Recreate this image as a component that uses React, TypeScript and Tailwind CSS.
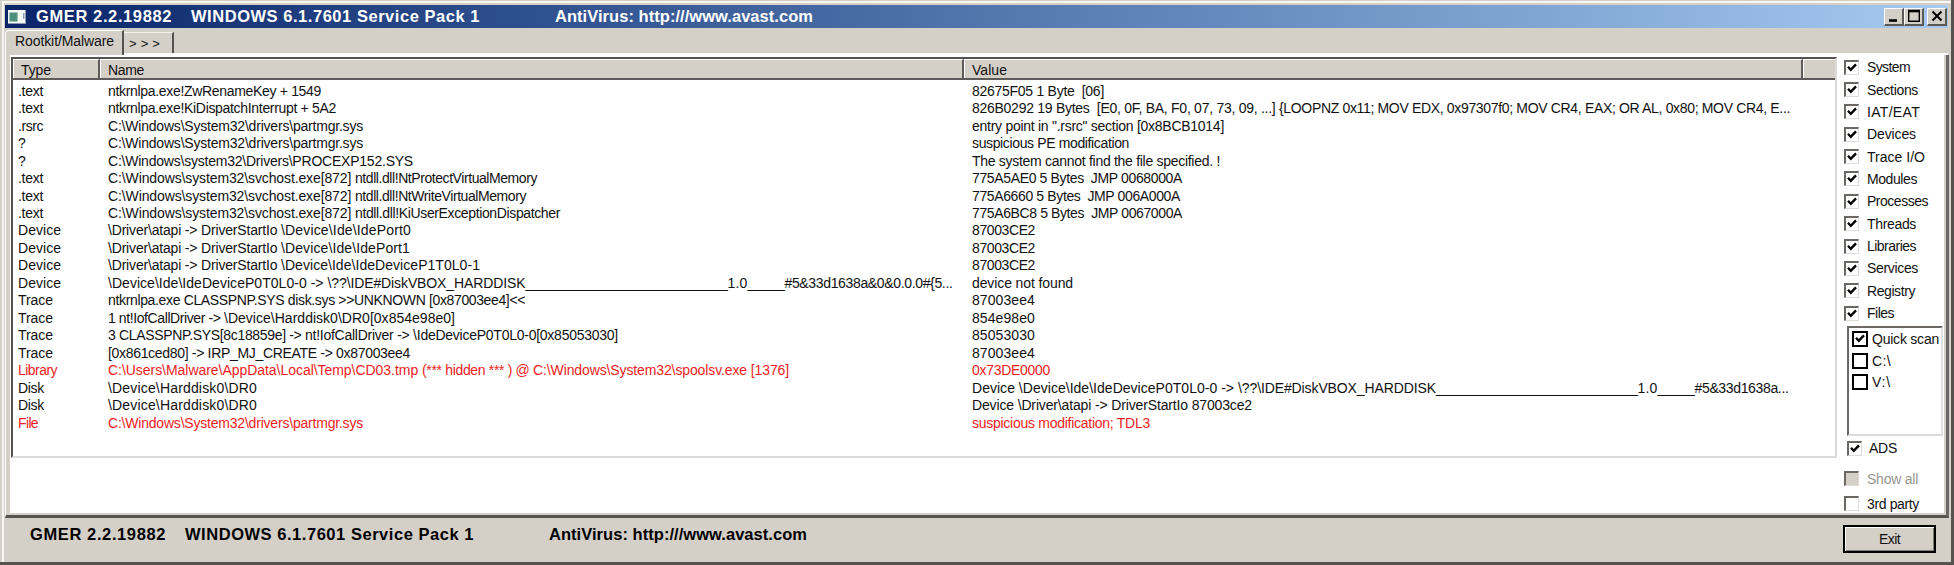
import { useLayoutEffect, useRef } from "react";

type Seg = [text: string, width: number];

/** Text set to an exact advance width by adjusting its tracking. */
function Fit({ t, w, className = "" }: { t: string; w: number; className?: string }) {
  const ref = useRef<HTMLSpanElement>(null);
  useLayoutEffect(() => {
    const el = ref.current;
    if (!el) return;
    el.style.letterSpacing = "0px";
    const natural = el.getBoundingClientRect().width;
    el.style.letterSpacing = `${(w - natural) / t.length}px`;
  }, [t, w]);
  return (
    <span ref={ref} className={`inline-block shrink-0 whitespace-pre ${className}`}>
      {t}
    </span>
  );
}

const U27 = "_".repeat(27);
const U5 = "_".repeat(5);

const rows: { type: Seg; name: Seg[]; value: Seg[]; red?: boolean }[] = [
  { type: [".text", 25], name: [["ntkrnlpa.exe!ZwRenameKey + 1549", 213]], value: [["82675F05 1 Byte  [06]", 132]] },
  {
    type: [".text", 25],
    name: [["ntkrnlpa.exe!KiDispatchInterrupt + 5A2", 228]],
    value: [
      ["826B0292 19 Bytes  [E0, 0F, BA, F0, 07, 73, 09, ...] ", 307],
      ["{LOOPNZ 0x11; MOV EDX, 0x97307f0; MOV CR4, EAX; OR AL, 0x80; MOV CR4, E...", 511],
    ],
  },
  { type: [".rsrc", 25], name: [["C:\\Windows\\System32\\drivers\\partmgr.sys", 255]], value: [['entry point in ".rsrc" section [0x8BCB1014]', 252]] },
  { type: ["?", 7], name: [["C:\\Windows\\System32\\drivers\\partmgr.sys", 255]], value: [["suspicious PE modification", 157]] },
  { type: ["?", 7], name: [["C:\\Windows\\system32\\Drivers\\PROCEXP152.SYS", 305]], value: [["The system cannot find the file specified. !", 248]] },
  { type: [".text", 25], name: [["C:\\Windows\\system32\\svchost.exe[872] ", 247], ["ntdll.dll!NtProtectVirtualMemory", 182]], value: [["775A5AE0 5 Bytes  JMP 0068000A", 210]] },
  { type: [".text", 25], name: [["C:\\Windows\\system32\\svchost.exe[872] ", 247], ["ntdll.dll!NtWriteVirtualMemory", 171]], value: [["775A6660 5 Bytes  JMP 006A000A", 208]] },
  { type: [".text", 25], name: [["C:\\Windows\\system32\\svchost.exe[872] ", 247], ["ntdll.dll!KiUserExceptionDispatcher", 205]], value: [["775A6BC8 5 Bytes  JMP 0067000A", 210]] },
  { type: ["Device", 43], name: [["\\Driver\\atapi -> DriverStartIo ", 173], ["\\Device\\Ide\\IdePort0", 130]], value: [["87003CE2", 63]] },
  { type: ["Device", 43], name: [["\\Driver\\atapi -> DriverStartIo ", 173], ["\\Device\\Ide\\IdePort1", 129]], value: [["87003CE2", 63]] },
  { type: ["Device", 43], name: [["\\Driver\\atapi -> DriverStartIo ", 173], ["\\Device\\Ide\\IdeDeviceP1T0L0-1", 199]], value: [["87003CE2", 63]] },
  {
    type: ["Device", 43],
    name: [["\\Device\\Ide\\IdeDeviceP0T0L0-0 -> ", 219.5], ["\\??\\IDE#DiskVBOX_HARDDISK", 198], [U27, 202], ["1.0", 20], [U5, 37], ["#5&33d1638a&0&0.0.0#{5...", 168]],
    value: [["device not found", 101]],
  },
  { type: ["Trace", 35], name: [["ntkrnlpa.exe CLASSPNP.SYS disk.sys >>UNKNOWN ", 321], ["[0x87003ee4]<<", 96]], value: [["87003ee4", 63]] },
  { type: ["Trace", 35], name: [["1 nt!IofCallDriver -> ", 116], ["\\Device\\Harddisk0\\DR0[0x854e98e0]", 231]], value: [["854e98e0", 63]] },
  { type: ["Trace", 35], name: [["3 CLASSPNP.SYS[8c18859e] -> ", 197], ["nt!IofCallDriver -> \\IdeDeviceP0T0L0-0[0x85053030]", 313]], value: [["85053030", 63]] },
  { type: ["Trace", 35], name: [["[0x861ced80] -> IRP_MJ_CREATE -> 0x87003ee4", 302]], value: [["87003ee4", 63]] },
  {
    type: ["Library", 39],
    name: [["C:\\Users\\Malware\\AppData\\Local\\Temp\\CD03.tmp ", 314], ["(*** hidden *** ) @ ", 111], ["C:\\Windows\\System32\\spoolsv.exe [1376]", 256]],
    value: [["0x73DE0000", 78]],
    red: true,
  },
  {
    type: ["Disk", 26],
    name: [["\\Device\\Harddisk0\\DR0", 149]],
    value: [["Device \\Device\\Ide\\IdeDeviceP0T0L0-0 -> ", 266], ["\\??\\IDE#DiskVBOX_HARDDISK", 198], [U27, 201.5], ["1.0", 20], [U5, 37], ["#5&33d1638a...", 94]],
  },
  { type: ["Disk", 26], name: [["\\Device\\Harddisk0\\DR0", 149]], value: [["Device \\Driver\\atapi -> DriverStartIo 87003ce2", 280]] },
  { type: ["File", 20], name: [["C:\\Windows\\System32\\drivers\\partmgr.sys", 255]], value: [["suspicious modification; TDL3", 178]], red: true },
];

const scans: Seg[] = [
  ["System", 43], ["Sections", 51], ["IAT/EAT", 53], ["Devices", 49], ["Trace I/O", 58], ["Modules", 50],
  ["Processes", 61], ["Threads", 49], ["Libraries", 49], ["Services", 51], ["Registry", 48], ["Files", 27],
];

function Tick() {
  return (
    <svg viewBox="0 0 10 10" className="size-[10px]" fill="none" stroke="#000" strokeWidth="2.4">
      <path d="M1 3.8 L3.8 6.8 L9 1.4" />
    </svg>
  );
}

function Box({ on, off }: { on?: boolean; off?: boolean }) {
  return (
    <span
      className={`flex size-[15px] shrink-0 items-center justify-center border-t-2 border-l-2 border-r border-b border-t-[#6a6765] border-l-[#6a6765] border-r-[#dedcd8] border-b-[#dedcd8] ${off ? "bg-[#d4d0c8]" : "bg-white"}`}
    >
      {on && <Tick />}
    </span>
  );
}

function DriveBox({ on }: { on?: boolean }) {
  return (
    <span className="flex size-[16px] shrink-0 items-center justify-center border-2 border-black bg-white">{on && <Tick />}</span>
  );
}

function CaptionButton({ children, className = "" }: { children: React.ReactNode; className?: string }) {
  return (
    <span
      className={`flex h-[18px] w-5 items-center justify-center border-t border-l border-r-2 border-b-2 border-t-white border-l-white border-r-[#5c5a58] border-b-[#5c5a58] bg-[#d4d0c8] ${className}`}
    >
      {children}
    </span>
  );
}

function Header({ children, className = "" }: { children?: React.ReactNode; className?: string }) {
  return (
    <div className={`flex h-full shrink-0 items-center border-t border-l border-white pt-px ${className}`}>{children}</div>
  );
}

const cellRow = (segs: Seg[]) => segs.map(([t, w], i) => <Fit key={i} t={t} w={w} />);

export default function App() {
  return (
    <div className="flex h-[565px] w-[1954px] flex-col overflow-hidden border-r-[3px] border-b-[3px] border-r-[#55534f] border-b-[#55534f] bg-[#d4d0c8] font-['Liberation_Sans',sans-serif] text-[14px] leading-none text-[#111]">
      <div className="flex min-h-0 flex-1 flex-col border-t border-l-2 border-[#d4d0c8]">
        <div className="flex min-h-0 flex-1 flex-col border-t-2 border-l-2 border-[#f7f6f3]">
          {/* Title bar */}
          <div className="ml-px mt-[2px] flex h-[23px] w-[1943px] shrink-0 items-center bg-linear-to-r from-[#0a246a] to-[#a6caf0] text-[16.5px] font-bold text-white">
            <svg viewBox="0 0 18 14" className="ml-[3px] h-[14px] w-[18px]">
              <rect width="18" height="14" fill="#f4f6f4" />
              <rect x="1.5" y="2.5" width="8" height="9" fill="#4d8f7c" />
              <rect x="15" y="3" width="1.5" height="6" fill="#8aa0b8" />
              <path d="M0 13.5H18M17.5 0V14" stroke="#8c98ac" />
            </svg>
            <Fit t="GMER 2.2.19882" w={136} className="ml-[10px]" />
            <Fit t="WINDOWS 6.1.7601 Service Pack 1" w={289} className="ml-[19px]" />
            <Fit t="AntiVirus: http:///www.avast.com" w={258} className="ml-[75px]" />
            <span className="ml-auto flex pr-px">
              <CaptionButton>
                <svg viewBox="0 0 14 14" className="size-[14px]"><path d="M2 11.5H10" stroke="#000" strokeWidth="2.6" /></svg>
              </CaptionButton>
              <CaptionButton>
                <svg viewBox="0 0 14 14" className="size-[14px]" fill="none" stroke="#000"><path d="M1.7 2V12.3H12.3V2" strokeWidth="1.4" /><path d="M1 2H13" strokeWidth="2.6" /></svg>
              </CaptionButton>
              <CaptionButton className="ml-[3px]">
                <svg viewBox="0 0 14 14" className="size-[14px]" stroke="#000" strokeWidth="2"><path d="M2.5 2.5L11.5 11.5M11.5 2.5L2.5 11.5" /></svg>
              </CaptionButton>
            </span>
          </div>

          {/* Tabs */}
          <div className="ml-px flex h-[27px] w-[1943px] shrink-0 items-end">
            <div className="flex h-[25px] w-[119px] items-center rounded-tl-sm border-t border-l border-r-2 border-t-white border-l-white border-r-[#55534f] pb-[4px] pl-[9px]">
              <Fit t="Rootkit/Malware" w={99} />
            </div>
            <div className="flex h-full flex-1 items-end border-b-2 border-white">
              <div className="flex h-[21px] w-[50px] items-center border-t border-r-2 border-t-[#f4f2ee] border-r-[#55534f] pl-[5px] pt-px">
                <Fit t=">>>" w={35} className="text-[13px]" />
              </div>
            </div>
          </div>

          {/* Page */}
          <div className="ml-px flex h-[463px] w-[1944px] shrink-0 border-r-[3px] border-b-[3px] border-l border-l-white border-r-[#6a6866] border-b-[#55534f] bg-[#d4d0c8] pb-[2px] pl-[4px] pr-[2px]">
            <div className="flex min-w-0 flex-1 bg-white">
              <div className="ml-px mt-[2px] flex h-[401px] w-[1826px] shrink-0 flex-col border-t-2 border-r-2 border-b-2 border-l-2 border-t-[#55534f] border-r-[#dddbda] border-b-[#dddbda] border-l-[#55534f]">
                <div className="flex h-[21px] shrink-0 border-b-2 border-[#5e5a5a] bg-[#d4d0c8]">
                  <Header className="w-[87px] border-r-2 border-r-[#5e5a5a] pl-[7px]"><Fit t="Type" w={30} /></Header>
                  <Header className="w-[864px] border-r-2 border-r-[#5e5a5a] pl-[7px]"><Fit t="Name" w={36} /></Header>
                  <Header className="w-[839px] border-r-2 border-r-[#5e5a5a] pl-[7px]"><Fit t="Value" w={35} /></Header>
                  <Header className="flex-1" />
                </div>
                <div className="flex flex-col pt-[2px]">
                  {rows.map((r, i) => (
                    <div key={i} className={`flex h-[17.48px] items-center ${r.red ? "text-[#ed1c24]" : ""}`}>
                      <span className="flex w-[95px] shrink-0 pl-[5px]"><Fit t={r.type[0]} w={r.type[1]} /></span>
                      <span className="flex w-[864px] shrink-0">{cellRow(r.name)}</span>
                      <span className="flex">{cellRow(r.value)}</span>
                    </div>
                  ))}
                </div>
              </div>

              {/* Options */}
              <div className="flex flex-1 flex-col pt-px">
                <div className="flex shrink-0 flex-col pl-[7px]">
                  {scans.map(([t, w]) => (
                    <label key={t} className="flex h-[22.36px] items-center gap-[8px]">
                      <Box on />
                      <Fit t={t} w={w} />
                    </label>
                  ))}
                </div>
                <div className="ml-[10px] mt-[2px] flex h-[110px] w-[96px] shrink-0 flex-col border-t-2 border-l-2 border-r-2 border-b-2 border-t-[#6a6765] border-l-[#6a6765] border-r-[#e2e0de] border-b-[#dddbda] pl-[3px]">
                  <div className="flex h-[22px] items-center gap-[4px]"><DriveBox on /><Fit t="Quick scan" w={67} /></div>
                  <div className="flex h-[21px] items-center gap-[4px]"><DriveBox /><Fit t="C:\" w={19} /></div>
                  <div className="flex h-[21px] items-center gap-[4px]"><DriveBox /><Fit t="V:\" w={19} /></div>
                </div>
                <div className="flex h-[24px] shrink-0 items-center gap-[7px] pl-[10px]"><Box on /><Fit t="ADS" w={28} /></div>
                <div className="mt-[6px] flex h-[25px] shrink-0 items-center gap-[8px] pl-[7px] text-[#98958f]"><Box off /><Fit t="Show all" w={51} /></div>
                <div className="mt-[3px] flex h-[19px] shrink-0 items-center gap-[8px] pl-[7px]"><Box /><Fit t="3rd party" w={52} /></div>
              </div>
            </div>
          </div>

          {/* Footer */}
          <div className="flex flex-1 items-start">
            <div className="flex items-center pl-[26px] pt-[8px] text-[16.5px] font-bold text-black">
              <Fit t="GMER 2.2.19882" w={136} />
              <Fit t="WINDOWS 6.1.7601 Service Pack 1" w={289} className="ml-[19px]" />
              <Fit t="AntiVirus: http:///www.avast.com" w={258} className="ml-[75px]" />
            </div>
            <button className="mt-[7px] ml-auto mr-[15px] h-[28px] w-[93px] border-2 border-black bg-[#d4d0c8] pb-px shadow-[inset_1px_1px_0_#fff,inset_-1px_-1px_0_#807d78]">
              <Fit t="Exit" w={21} />
            </button>
          </div>
        </div>
      </div>
    </div>
  );
}
